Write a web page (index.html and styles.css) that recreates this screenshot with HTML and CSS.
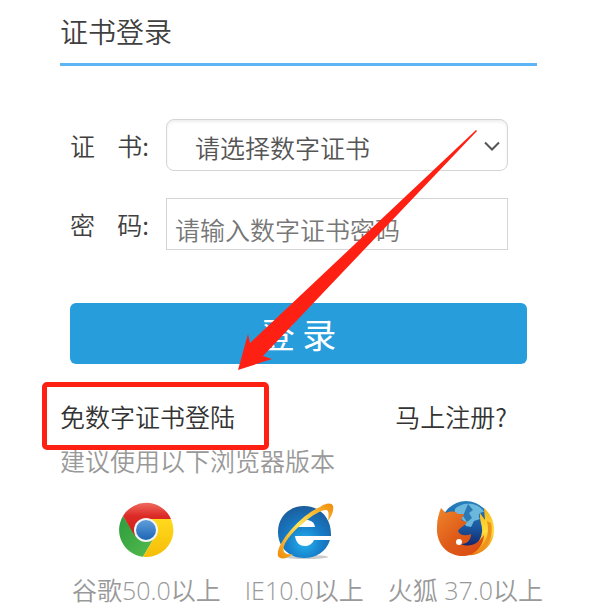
FILE: index.html
```html
<!DOCTYPE html>
<html lang="zh-CN">
<head>
  <meta charset="UTF-8">
  <meta name="viewport" content="width=device-width, initial-scale=1">
  <title>证书登录</title>
  <link rel="stylesheet" href="styles.css">
</head>
<body>
  <main class="login">
    <h1 class="login-title">证书登录</h1>

    <form class="login-form">
      <div class="field">
        <label for="cert">证&nbsp;&nbsp;&nbsp;&nbsp;书:</label>
        <div class="select-wrap">
          <select id="cert" name="cert">
            <option>请选择数字证书</option>
          </select>
          <svg class="chevron" viewBox="0 0 16 10" aria-hidden="true">
            <path d="M1 1.5 8 8.5 15 1.5" fill="none" stroke="#555" stroke-width="2"/>
          </svg>
        </div>
      </div>
      <div class="field">
        <label for="password">密&nbsp;&nbsp;&nbsp;&nbsp;码:</label>
        <input type="password" id="password" name="password" placeholder="请输入数字证书密码">
      </div>
      <button type="submit" class="submit">登 录</button>
    </form>

    <div class="links">
      <a href="#" class="marked">免数字证书登陆</a>
      <a href="#">马上注册?</a>
    </div>

    <p class="hint">建议使用以下浏览器版本</p>

    <ul class="browsers">
      <li>
        <svg class="logo" viewBox="0 0 60 60" aria-hidden="true">
          <defs>
            <linearGradient id="cr" x1="0" y1="0" x2="0" y2="1"><stop offset="0" stop-color="#ef6a5f"/><stop offset=".4" stop-color="#dc2a26"/><stop offset="1" stop-color="#cf1f1c"/></linearGradient>
            <linearGradient id="cg" x1="0" y1="0" x2="1" y2="1"><stop offset="0" stop-color="#2c9c3c"/><stop offset="1" stop-color="#55bb50"/></linearGradient>
            <linearGradient id="cy" x1="0" y1="0" x2="0" y2="1"><stop offset="0" stop-color="#ffd91c"/><stop offset="1" stop-color="#f6bd08"/></linearGradient>
            <linearGradient id="cb" x1="0" y1="0" x2="0" y2="1"><stop offset="0" stop-color="#5f9edb"/><stop offset="1" stop-color="#1d65b4"/></linearGradient>
          </defs>
          <path d="M7 16A27 27 0 0 0 27 56.800L38 38 20 36Z" fill="url(#cg)"/>
          <path d="M7 16A27 27 0 0 1 55 19H30L19 36Z" fill="url(#cr)"/>
          <path d="M38 38 27 56.800A27 27 0 0 0 55 19H32Z" fill="url(#cy)"/>
          <circle cx="30" cy="30" r="12" fill="#f4f4f4"/>
          <circle cx="30" cy="30" r="10" fill="url(#cb)"/>
        </svg>
        谷歌50.0以上
      </li>
      <li>
        <svg class="logo" viewBox="0 0 60 60" aria-hidden="true">
          <defs>
            <radialGradient id="ie" cx=".5" cy=".7" r=".7"><stop offset="0" stop-color="#25b2ee"/><stop offset=".5" stop-color="#167cc8"/><stop offset="1" stop-color="#1c5d9b"/></radialGradient>
            <linearGradient id="io" x1="0" y1="1" x2="1" y2="0"><stop offset="0" stop-color="#ee8908"/><stop offset=".5" stop-color="#ffe45a"/><stop offset="1" stop-color="#f18a0a"/></linearGradient>
          </defs>
          <ellipse cx="32" cy="57" rx="22" ry="2" fill="#ccc"/>
          <path fill-rule="evenodd" fill="url(#ie)" d="M30 6C45 6 57 17 57 34V36H21C22 43 26 46 31 46C35 46 38 44 40 40H56C52 52 42 58 30 58C15 58 4 47 4 32C4 17 15 6 30 6ZM22 27H41C40 22 37 20 32 20C27 20 23 22 22 27Z"/>
          <path d="M22 36H57V39H40Q38 45 31 45Q24 44 22 36Z" fill="#fff"/>
          <path d="M46 7C51 3 58 2 59 6C60 10 58 16 54 21C55 15 55 10 52 10C44 9 15 32 10 46C8 53 12 55 19 54C13 59 6 60 4 56C1 44 28 14 46 7Z" fill="url(#io)"/>
        </svg>
        IE10.0以上
      </li>
      <li>
        <svg class="logo" viewBox="0 0 60 60" aria-hidden="true">
          <defs>
            <linearGradient id="fb" x1="0" y1="0" x2="0" y2="1"><stop offset="0" stop-color="#2782bd"/><stop offset=".5" stop-color="#1b5aa2"/><stop offset="1" stop-color="#101b60"/></linearGradient>
            <linearGradient id="fo" x1="0" y1="0" x2="1" y2="1"><stop offset="0" stop-color="#ef862c"/><stop offset=".5" stop-color="#df5b18"/><stop offset="1" stop-color="#d94912"/></linearGradient>
            <linearGradient id="fy" x1="0" y1="0" x2="0" y2="1"><stop offset="0" stop-color="#f7b51a"/><stop offset=".5" stop-color="#ffdf3e"/><stop offset="1" stop-color="#e9780f"/></linearGradient>
          </defs>
          <circle cx="31" cy="26" r="25" fill="url(#fb)"/>
          <path d="M20 9C26 2 43 1 49 12C45 12 42 15 45 19L39 21 36 27 31 26 28 20 19 16Z" fill="#6cb7dc"/>
          <path d="M33 4 38 10 34 13 37 18 32 22 28 16Z" fill="#2b78b6"/>
          <path d="M49 8C60 17 62 34 55 44C47 55 34 58 22 53C38 51 46 42 47 32C48 26 44 21 45 13L50 20Z" fill="url(#fy)"/>
          <path d="M6 8 11 13C16 11 20 11 23 14L29 14 26 20 32 22C30 26 25 27 23 31C25 36 31 36 36 34C36 41 31 44 26 44C35 48 43 44 49 35C48 48 38 57 25 56C10 54 1 42 2 27C2 19 4 13 6 8Z" fill="url(#fo)"/>
          <path d="M52 21C55 34 51 46 39 53C53 50 59 37 56 23Z" fill="#ee941c"/>
          <circle cx="24" cy="42" r="3" fill="#fff"/>
        </svg>
        火狐 37.0以上
      </li>
    </ul>

    <svg class="arrow" viewBox="0 0 240 242" aria-hidden="true">
      <path d="M238 1 12 214 10 205 0 241 34 230 25 227 239 2Z" fill="#ff2014"/>
    </svg>
  </main>
</body>
</html>
```
FILE: styles.css
```css
* {
  box-sizing: border-box;
}
body {
  margin: 0;
  background: #fff;
  color: #404040;
  font: 350 25px/36px "Noto Sans CJK SC", sans-serif;
}
.login {
  position: relative;
  padding: 0 74px 0 60px;
}
.login-title {
  margin: 0;
  padding: 11px 0 12px;
  border-bottom: 3px solid #5db5f5;
  font-size: 28px;
  line-height: 40px;
  font-weight: 350;
}
.login-form {
  padding: 53px 10px 0;
}
.field {
  display: flex;
  align-items: center;
  height: 52px;
  margin: 0 19px 27px 0;
}
.field label {
  flex: none;
  width: 96px;
  white-space: nowrap;
}
.select-wrap {
  position: relative;
  flex: 1;
}
select,
input {
  width: 100%;
  min-width: 0;
  height: 52px;
  border: 1px solid #d5d5d5;
  background: #fff;
  font: inherit;
  outline: none;
}
select {
  display: block;
  appearance: none;
  padding: 4px 40px 0 28px;
  border-radius: 8px;
  box-shadow: inset 0 2px 3px #eee;
  color: #555;
}
.chevron {
  position: absolute;
  top: 22px;
  right: 8px;
  width: 16px;
  height: 10px;
}
.field > input {
  flex: 1;
  padding: 10px 8px 0;
}
input::placeholder {
  color: #777;
}
.submit {
  display: block;
  width: 100%;
  height: 61px;
  margin-top: 53px;
  padding: 0;
  border: 0;
  border-radius: 6px;
  background: #279ddc;
  color: #fff;
  font: 400 34px/60px "Noto Sans CJK SC", sans-serif;
  cursor: pointer;
}
.links {
  display: flex;
  justify-content: space-between;
  padding: 34px 30px 0 0;
}
.links a {
  position: relative;
  color: #333;
  text-decoration: none;
}
/* red frame around the certificate-free login link */
.marked::after {
  content: "";
  position: absolute;
  inset: -16px -34px -16px -18px;
  border: 5px solid #ff2014;
  border-radius: 5px;
}
.hint {
  margin: 8px 0 0;
  color: #999;
}
.browsers {
  display: flex;
  gap: 24px;
  margin: 22px 0 0;
  padding: 0 0 0 12px;
  list-style: none;
  color: #999;
  font-family: "Open Sans", "Noto Sans CJK SC", sans-serif;
  white-space: nowrap;
}
.browsers li {
  display: flex;
  flex-direction: column;
  align-items: center;
  gap: 12px;
}
.logo {
  width: 60px;
  height: 60px;
}
.arrow {
  position: absolute;
  top: 129px;
  left: 238px;
  width: 240px;
  height: 242px;
  pointer-events: none;
}
```
